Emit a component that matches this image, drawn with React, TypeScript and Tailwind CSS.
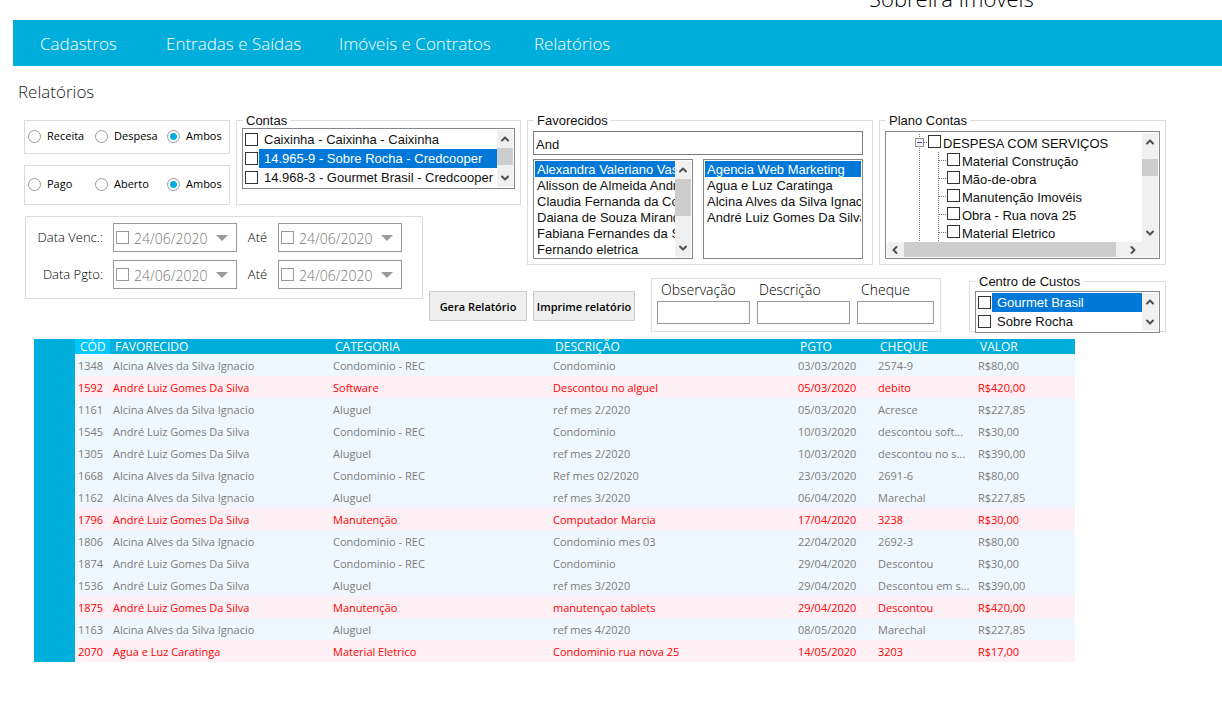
import React, { useState } from "react";
import { ChevronDown, ChevronLeft, ChevronRight, ChevronUp } from "lucide-react";

const navItems = [
  { label: "Cadastros", className: "w-[126px]" },
  { label: "Entradas e Saídas", className: "w-[173px]" },
  { label: "Imóveis e Contratos", className: "w-[195px]" },
  { label: "Relatórios", className: "w-[100px]" },
];

type Entry = [string, string, string, string, string, string, string, boolean?];

const A = "Alcina Alves da Silva Ignacio";
const L = "André Luiz Gomes Da Silva";

const entries: Entry[] = [
  ["1348", A, "Condominio - REC", "Condominio", "03/03/2020", "2574-9", "R$80,00"],
  ["1592", L, "Software", "Descontou no alguel", "05/03/2020", "debito", "R$420,00", true],
  ["1161", A, "Aluguel", "ref mes 2/2020", "05/03/2020", "Acresce", "R$227,85"],
  ["1545", L, "Condominio - REC", "Condominio", "10/03/2020", "descontou soft...", "R$30,00"],
  ["1305", L, "Aluguel", "ref mes 2/2020", "10/03/2020", "descontou no s...", "R$390,00"],
  ["1668", A, "Condominio - REC", "Ref mes 02/2020", "23/03/2020", "2691-6", "R$80,00"],
  ["1162", A, "Aluguel", "ref mes 3/2020", "06/04/2020", "Marechal", "R$227,85"],
  ["1796", L, "Manutenção", "Computador Marcia", "17/04/2020", "3238", "R$30,00", true],
  ["1806", A, "Condominio - REC", "Condominio mes 03", "22/04/2020", "2692-3", "R$80,00"],
  ["1874", L, "Condominio - REC", "Condominio", "29/04/2020", "Descontou", "R$30,00"],
  ["1536", L, "Aluguel", "ref mes 3/2020", "29/04/2020", "Descontou em s...", "R$390,00"],
  ["1875", L, "Manutenção", "manutençao tablets", "29/04/2020", "Descontou", "R$420,00", true],
  ["1163", A, "Aluguel", "ref mes 4/2020", "08/05/2020", "Marechal", "R$227,85"],
  ["2070", "Agua e Luz Caratinga", "Material Eletrico", "Condominio rua nova 25", "14/05/2020", "3203", "R$17,00", true],
];

function Group({ title, className, children }: { title: string; className: string; children: React.ReactNode }) {
  return (
    <fieldset className={`min-w-0 border border-[#dcdcdc] pl-[5px] font-['Liberation_Sans',sans-serif] text-[13px] text-[#111] ${className}`}>
      <legend className="ml-px px-[3px] pt-0.5 leading-3">{title}</legend>
      {children}
    </fieldset>
  );
}

function RadioGroup({ name, options, className }: { name: string; options: string[]; className: string }) {
  return (
    <div role="radiogroup" aria-label={name} className={`grid grid-cols-[67px_72px_1fr] items-center border border-[#dcdcdc] pb-0.5 pl-[3px] ${className}`}>
      {options.map((option, i) => (
        <label key={option} className="flex items-center gap-1.5 text-[11px] font-medium text-black">
          <input
            type="radio"
            name={name}
            defaultChecked={i === 2}
            className="size-[13px] appearance-none rounded-full border border-[#999] checked:bg-[radial-gradient(circle,#00aedb_0_3px,white_4px)]"
          />
          {option}
        </label>
      ))}
    </div>
  );
}

function ScrollBar({ thumb }: { thumb: string }) {
  return (
    <div aria-hidden="true" className="flex w-4 shrink-0 flex-col items-center bg-[#f0f0f0] text-[#505050]">
      <ChevronUp size={12} strokeWidth={4} className="my-[3px] shrink-0" />
      <div className="flex w-full flex-1 flex-col">
        <div className={`w-full bg-[#cdcdcd] ${thumb}`} />
      </div>
      <ChevronDown size={12} strokeWidth={4} className="my-[3px] shrink-0" />
    </div>
  );
}

const checkbox = "size-[13px] shrink-0 appearance-none border border-[#333] bg-white checked:bg-[#0078d7]";

function CheckList({ items, selected }: { items: string[]; selected: number }) {
  return (
    <ul className="min-w-0 flex-1 pl-px">
      {items.map((item, i) => (
        <li key={item}>
          <label className="flex h-[19px] items-center gap-px">
            <input type="checkbox" className={checkbox} />
            <span className={`flex-1 overflow-hidden pl-[5px] leading-[19px] whitespace-nowrap ${i === selected ? "bg-[#0078d7] text-white" : ""}`}>
              {item}
            </span>
          </label>
        </li>
      ))}
    </ul>
  );
}

function ListBox({ label, items }: { label: string; items: string[] }) {
  return (
    <select
      aria-label={label}
      size={6}
      defaultValue={items[0]}
      className="h-full min-w-0 flex-1 overflow-hidden bg-white leading-4 outline-none [scrollbar-width:none]"
    >
      {items.map((item) => (
        <option
          key={item}
          className="h-4 min-h-4 overflow-hidden p-0 pt-px pl-0.5 leading-[15px] whitespace-nowrap checked:bg-[linear-gradient(#0078d7,#0078d7)] checked:[-webkit-text-fill-color:white]"
        >
          {item}
        </option>
      ))}
    </select>
  );
}

function TreeLines({ root }: { root?: boolean }) {
  return root ? (
    <svg width="42" height="18" className="shrink-0" shapeRendering="crispEdges" fill="none" stroke="#777">
      <path d="M33.5 0V18M38 8.5H42" strokeDasharray="1 1" />
      <rect x="29.5" y="4.5" width="8" height="8" fill="#f4f4f4" stroke="#919191" />
      <path d="M31 8.5H36" stroke="#3a4fa0" />
    </svg>
  ) : (
    <svg width="61" height="18" className="shrink-0" shapeRendering="crispEdges" fill="none" stroke="#777">
      <path d="M33.5 0V18M52.5 0V18M53 8.5H61" strokeDasharray="1 1" />
    </svg>
  );
}

function DatePicker({ label }: { label: string }) {
  return (
    <div className="flex h-[29px] w-[124px] items-center border border-[#999] bg-white pl-0.5">
      <input type="checkbox" aria-label={`Usar ${label}`} className="size-[13px] shrink-0 appearance-none border border-[#999] checked:bg-[#999]" />
      <input type="text" aria-label={label} defaultValue="24/06/2020" className="ml-[5px] w-[82px] bg-transparent pt-px text-[14px] text-[#777] outline-none" />
      <svg width="12" height="6" viewBox="0 0 12 6" fill="#999" aria-hidden="true">
        <path d="M0 0H12L6 6Z" />
      </svg>
    </div>
  );
}

function DateRow({ label }: { label: string }) {
  return (
    <div className="flex items-center text-[13px] font-light text-black">
      <span className="w-[77px] text-right">{label}:</span>
      <div className="ml-[10px]">
        <DatePicker label={`${label} de`} />
      </div>
      <span className="w-[41px] text-center">Até</span>
      <DatePicker label={`${label} até`} />
    </div>
  );
}

export default function App() {
  const [search, setSearch] = useState("And");
  return (
    <div className="min-h-screen bg-white font-['Open_Sans','Noto_Sans',sans-serif]">
      <header className="h-5 overflow-hidden pl-[869px]">
        <p className="-mt-3 text-[22px] leading-5 font-light text-black">Sobreira Imóveis</p>
      </header>

      <nav className="ml-[13px] flex h-[46px] items-center bg-[#00aedb] pt-0.5 pl-[27px] text-[17px] font-light text-white">
        {navItems.map((item) => (
          <a key={item.label} href="#" className={`whitespace-nowrap ${item.className}`}>
            {item.label}
          </a>
        ))}
      </nav>

      <main>
        <h1 className="mt-[14px] mb-[9px] pl-[18px] text-[17px] leading-6 font-light text-[#222]">Relatórios</h1>

        <form
          onSubmit={(e) => e.preventDefault()}
          className="mr-14 ml-6 grid grid-cols-[206fr_187fr_92fr_118fr_222fr_84fr_197fr] grid-rows-[92px_69px_58px] gap-x-1.5"
        >
          <div className="col-start-1 row-start-1 flex flex-col justify-between pt-[7px]">
            <RadioGroup name="Tipo" options={["Receita", "Despesa", "Ambos"]} className="h-[34px]" />
            <RadioGroup name="Situação" options={["Pago", "Aberto", "Ambos"]} className="h-10" />
          </div>

          <Group title="Contas" className="col-span-2 col-start-2 row-start-1 pr-[5px]">
            <div className="mt-px flex h-[61px] border border-[#828790] p-px">
              <CheckList
                selected={1}
                items={[
                  "Caixinha - Caixinha - Caixinha",
                  "14.965-9 - Sobre Rocha - Credcooper",
                  "14.968-3 - Gourmet Brasil - Credcooper",
                ]}
              />
              <ScrollBar thumb="h-[17px]" />
            </div>
          </Group>

          <Group title="Favorecidos" className="col-span-2 col-start-4 row-span-2 row-start-1 mb-[9px] pr-[9px]">
            <input
              type="text"
              aria-label="Buscar favorecido"
              value={search}
              onChange={(e) => setSearch(e.target.value)}
              className="mt-1 block h-6 w-full border border-[#7a7a7a] px-0.5 pt-0.5 outline-none"
            />
            <div className="mt-1 grid grid-cols-2 gap-[10px]">
              <div className="flex h-[100px] min-w-0 border border-[#828790] p-px">
                <ListBox
                  label="Favorecidos disponíveis"
                  items={[
                    "Alexandra Valeriano Vasconcelos",
                    "Alisson de Almeida Andrade",
                    "Claudia Fernanda da Costa",
                    "Daiana de Souza Miranda",
                    "Fabiana Fernandes da Silva",
                    "Fernando eletrica",
                  ]}
                />
                <ScrollBar thumb="h-[37px]" />
              </div>
              <div className="flex h-[100px] min-w-0 border border-[#828790] p-px">
                <ListBox
                  label="Favorecidos selecionados"
                  items={["Agencia Web Marketing", "Agua e Luz Caratinga", A, L]}
                />
              </div>
            </div>
          </Group>

          <Group title="Plano Contas" className="col-span-2 col-start-6 row-span-2 row-start-1 mb-[9px] pr-[5px]">
            <div className="mt-1 flex h-32 flex-col border border-[#828790] pr-px pb-px">
              <div className="flex h-[110px] pt-px">
                <ul className="min-w-0 flex-1 overflow-hidden pt-px">
                  {[
                    "DESPESA COM SERVIÇOS",
                    "Material Construção",
                    "Mão-de-obra",
                    "Manutenção Imovéis",
                    "Obra - Rua nova 25",
                    "Material Eletrico",
                  ].map((item, i) => (
                    <li key={item}>
                      <label className="flex h-[18px] items-start whitespace-nowrap">
                        <TreeLines root={i === 0} />
                        <input type="checkbox" className={`mt-px ${checkbox}`} />
                        <span className="pl-0.5 leading-5">{item}</span>
                      </label>
                    </li>
                  ))}
                </ul>
                <ScrollBar thumb="mt-2 h-[17px]" />
              </div>
              <div aria-hidden="true" className="ml-px flex flex-1 items-center bg-[#f0f0f0] text-[#505050]">
                <ChevronLeft size={12} strokeWidth={4} className="mr-[3px] ml-0.5 shrink-0" />
                <div className="h-full w-[212px] bg-[#cdcdcd]" />
                <ChevronRight size={12} strokeWidth={4} className="ml-[11px] shrink-0" />
              </div>
            </div>
          </Group>

          <div className="col-span-2 col-start-1 row-span-2 row-start-2 mt-[11px] mb-[33px] ml-px flex flex-col gap-2 border border-[#dcdcdc] pt-1.5">
            <DateRow label="Data Venc." />
            <DateRow label="Data Pgto" />
          </div>

          <div className="col-span-2 col-start-3 row-start-3 mb-[11px] flex items-end gap-1.5 text-[11px] font-semibold text-black">
            <button type="button" className="h-[30px] w-[98px] border border-[#ccc] bg-[#eee] pt-0.5 whitespace-nowrap">
              Gera Relatório
            </button>
            <button type="button" className="h-[30px] w-[102px] border border-[#ccc] bg-[#eee] pt-0.5 whitespace-nowrap">
              Imprime relatório
            </button>
          </div>

          <div className="col-span-2 col-start-5 row-start-3 mt-1 mr-[22px] flex gap-[7px] border border-[#dcdcdc] px-[5px] text-[14px] leading-[22px] font-light text-black">
            <label className="w-[93px]">
              <span className="pl-1">Observação</span>
              <input type="text" className="block h-[23px] w-full border border-[#999]" />
            </label>
            <label className="w-[93px]">
              <span className="pl-0.5">Descrição</span>
              <input type="text" className="block h-[23px] w-full border border-[#999]" />
            </label>
            <label className="w-[77px]">
              <span className="pl-1">Cheque</span>
              <input type="text" className="block h-[23px] w-full border border-[#999]" />
            </label>
          </div>

          <Group title="Centro de Custos" className="col-start-7 row-start-3 pr-[5px]">
            <div className="mt-[3px] flex h-[42px] border border-[#828790] bg-white p-px">
              <CheckList selected={0} items={["Gourmet Brasil", "Sobre Rocha"]} />
              <ScrollBar thumb="h-0" />
            </div>
          </Group>
        </form>

        <div className="mt-[7px] ml-[34px] flex w-[1041px] bg-[#00aedb] pl-[41px]">
          <table className="w-full table-fixed text-left text-[11px] text-[#7c7c7c]">
            <colgroup>
              <col className="w-[35px]" />
              <col className="w-[220px]" />
              <col className="w-[220px]" />
              <col className="w-[245px]" />
              <col className="w-[80px]" />
              <col className="w-[100px]" />
              <col className="w-[100px]" />
            </colgroup>
            <thead className="text-[12px] leading-[15px] text-white">
              <tr>
                {["CÓD", "FAVORECIDO", "CATEGORIA", "DESCRIÇÃO", "PGTO", "CHEQUE", "VALOR"].map((h, i) => (
                  <th key={h} className={`p-0 pl-[5px] font-normal ${i === 0 ? "bg-[#00c8fb]" : ""}`}>
                    {h}
                  </th>
                ))}
              </tr>
            </thead>
            <tbody>
              {entries.map(([code, ...rest]) => {
                const debit = rest[6] === true;
                return (
                  <tr key={code} className={debit ? "bg-[#fff0f5] font-medium text-[#ff0000]" : "bg-[#f0f8ff]"}>
                    {[code, ...rest.slice(0, 6)].map((cell, i) => (
                      <td key={i} className="p-0 pt-0.5 pl-[3px] leading-5 whitespace-nowrap">
                        {cell}
                      </td>
                    ))}
                  </tr>
                );
              })}
            </tbody>
          </table>
        </div>
      </main>
    </div>
  );
}
